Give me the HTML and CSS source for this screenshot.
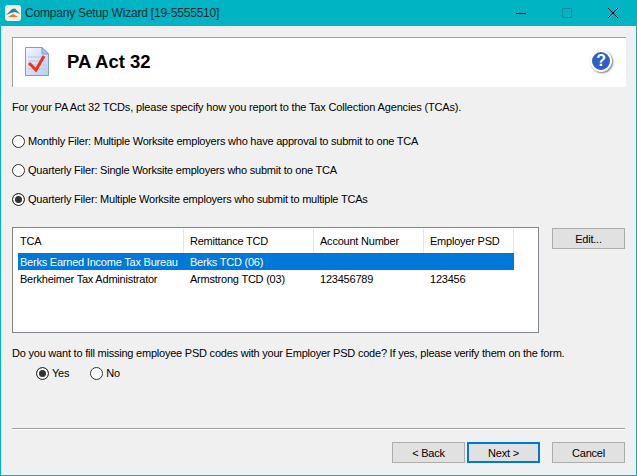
FILE: index.html
```html
<!DOCTYPE HTML>
<html lang="en">
  <head>
    <title>Company Setup Wizard</title>
    <meta charset="utf-8" />
    <link rel="stylesheet" href="styles.css">
  </head>
  <body>
    <div class='window'>
      <div class='titlebar'>
        <svg class='app-icon' width="16" height="16" viewBox="0 0 16 16">
          <rect x="0" y="0" width="16" height="16" rx="3" fill="#f4efe6"/>
          <path d="M1 10 L7 4 L10 3.500 L15 9 L10 7 L6 8 Z" fill="#1f8a9c"/>
          <path d="M3 12 L8 9 L13 12 Z" fill="#e8792c"/>
        </svg>
        <span class='title'>Company Setup Wizard [19-5555510]</span>
        <div class='controls'>
          <svg width="46" height="26" viewBox="0 0 46 26"><path d="M18 13.500 H28" stroke="#000" fill="none"/></svg>
          <svg width="46" height="26" viewBox="0 0 46 26"><rect x="18.500" y="8.500" width="9" height="9" stroke="#058b9a" fill="none"/></svg>
          <svg width="46" height="26" viewBox="0 0 46 26"><path d="M18 8 L28 18 M28 8 L18 18" stroke="#000" fill="none"/></svg>
        </div>
      </div>

      <div class='content'>
        <div class='header'>
          <svg class='doc-icon' width="26" height="32" viewBox="0 0 26 32">
            <defs>
              <linearGradient id="page" x1="0" y1="0" x2="1" y2="1">
                <stop offset="0" stop-color="#f4f7fd"/>
                <stop offset="1" stop-color="#b9cdf0"/>
              </linearGradient>
            </defs>
            <path d="M1.500 1.500 H18 L24.500 8 V29.500 H1.500 Z" fill="url(#page)" stroke="#7f9bd2"/>
            <path d="M18 1.500 V8 H24.500 Z" fill="#a9c4ee" stroke="#7f9bd2"/>
            <path d="M4 11 H22 M4 15 H22 M4 19 H22 M4 23 H22" stroke="#b5c8e8"/>
            <path d="M5 17 L12 24 L20 10" stroke="#f0321c" stroke-width="3" fill="none"/>
          </svg>
          <h1 class='heading'>PA Act 32</h1>
          <div class='help'>?</div>
        </div>

        <p class='intro'>For your PA Act 32 TCDs, please specify how you report to the Tax Collection Agencies (TCAs).</p>

        <div class='filers'>
          <div class='option'><span class='radio'></span>Monthly Filer: Multiple Worksite employers who have approval to submit to one TCA</div>
          <div class='option'><span class='radio'></span>Quarterly Filer: Single Worksite employers who submit to one TCA</div>
          <div class='option'><span class='radio checked'></span>Quarterly Filer: Multiple Worksite employers who submit to multiple TCAs</div>
        </div>

        <div class='list-row'>
          <div class='list'>
            <div class='row head'>
              <div class='cell tca'>TCA</div>
              <div class='cell tcd'>Remittance TCD</div>
              <div class='cell acct'>Account Number</div>
              <div class='cell psd'>Employer PSD</div>
            </div>
            <div class='row selected'>
              <div class='cell tca'>Berks Earned Income Tax Bureau</div>
              <div class='cell tcd'>Berks TCD (06)</div>
              <div class='cell acct'></div>
              <div class='cell psd'></div>
            </div>
            <div class='row'>
              <div class='cell tca'>Berkheimer Tax Administrator</div>
              <div class='cell tcd'>Armstrong TCD (03)</div>
              <div class='cell acct'>123456789</div>
              <div class='cell psd'>123456</div>
            </div>
          </div>
          <button class='button'>Edit...</button>
        </div>

        <p class='question'>Do you want to fill missing employee PSD codes with your Employer PSD code? If yes, please verify them on the form.</p>
        <div class='yes-no'>
          <div class='option'><span class='radio checked'></span>Yes</div>
          <div class='option'><span class='radio'></span>No</div>
        </div>

        <div class='footer'>
          <button class='button'>&lt; Back</button>
          <button class='button default'>Next &gt;</button>
          <button class='button cancel'>Cancel</button>
        </div>
      </div>
    </div>
  </body>
</html>
```

FILE: styles.css
```css
* {
  box-sizing: border-box;
}

body {
  margin: 0;
  font-family: "Liberation Sans", Arial, sans-serif;
  font-size: 11px;
  letter-spacing: -0.22px;
  color: #000000;
}

.window {
  display: flex;
  flex-direction: column;
  width: 637px;
  height: 476px;
  overflow: hidden;
  border: 1px solid #00b4c4;
  border-top: 0;
  background-color: #f0f0f0;
}

.titlebar {
  display: flex;
  align-items: center;
  flex: none;
  height: 26px;
  padding-left: 4px;
  background-color: #00b4c4;
}

.app-icon {
  margin-right: 4px;
}

.title {
  font-size: 12px;
  letter-spacing: -0.2px;
  color: #0a2a2e;
}

.controls {
  display: flex;
  margin-left: auto;
}

.content {
  display: flex;
  flex-direction: column;
  flex: 1;
  padding: 11px 11px 12px;
}

.header {
  display: flex;
  align-items: center;
  flex: none;
  height: 50px;
  margin-right: -1px;
  padding-bottom: 2px;
  padding-left: 11px;
  border-top: 1px solid #a0a0a0;
  border-left: 1px solid #a0a0a0;
  background-color: #ffffff;
}

.doc-icon {
  flex: none;
}

.heading {
  margin: 0 0 0 17px;
  font-size: 18.5px;
  font-weight: bold;
  letter-spacing: 0;
}

.help {
  display: flex;
  align-items: center;
  justify-content: center;
  width: 22px;
  height: 22px;
  margin-left: auto;
  margin-right: 14px;
  margin-bottom: 2px;
  border: 2px solid #ffffff;
  border-radius: 50%;
  background-color: #2f5fc4;
  box-shadow: 1px 1px 2px #777777;
  color: #ffffff;
  font-size: 16px;
  font-weight: bold;
}

.intro {
  margin: 13px 0 0;
  line-height: 14px;
  letter-spacing: -0.16px;
}

.filers {
  display: flex;
  flex-direction: column;
  gap: 15px;
  margin-top: 20px;
}

.option {
  display: flex;
  align-items: center;
  height: 14px;
  line-height: 14px;
}

.radio {
  flex: none;
  width: 13px;
  height: 13px;
  margin-right: 3px;
  border: 1px solid #333333;
  border-radius: 50%;
  background-color: #ffffff;
}

.radio.checked {
  background-color: #333333;
  box-shadow: inset 0 0 0 2px #ffffff;
}

.list-row {
  display: flex;
  align-items: flex-start;
  margin-top: 21px;
}

.list {
  flex: none;
  width: 527px;
  height: 106px;
  padding: 1px 0 0 5px;
  border: 1px solid #828790;
  background-color: #ffffff;
}

.row {
  display: flex;
  width: 496px;
  height: 18px;
  line-height: 19px;
}

.row.head {
  height: 24px;
  line-height: 25px;
}

.row.head .cell {
  border-right: 1px solid #e5e5e5;
}

.row.selected {
  height: 17px;
  background-color: #0078d7;
  color: #ffffff;
}

.cell {
  flex: none;
  padding-left: 2px;
  white-space: nowrap;
  overflow: hidden;
}

.tca {
  width: 166px;
}

.tcd {
  width: 130px;
  padding-left: 6px;
}

.acct {
  width: 110px;
  padding-left: 6px;
}

.psd {
  width: 90px;
  padding-left: 6px;
}

.button {
  flex: none;
  width: 73px;
  height: 21px;
  padding: 0;
  border: 1px solid #adadad;
  background-color: #e1e1e1;
  color: #000000;
  font-family: inherit;
  font-size: 11px;
  letter-spacing: inherit;
}

.list-row .button {
  margin-top: 1px;
  margin-left: 13px;
}

.button.default {
  border: 2px solid #0078d7;
}

.button.cancel {
  margin-left: 10px;
}

.question {
  margin: 13px 0 0;
  line-height: 14px;
  white-space: nowrap;
}

.yes-no {
  display: flex;
  gap: 21px;
  margin-top: 6px;
  margin-left: 24px;
}

.footer {
  display: flex;
  justify-content: flex-end;
  gap: 2px;
  margin-top: auto;
  padding-top: 13px;
  border-top: 1px solid #a0a0a0;
  box-shadow: inset 0 1px 0 #ffffff;
}
```
